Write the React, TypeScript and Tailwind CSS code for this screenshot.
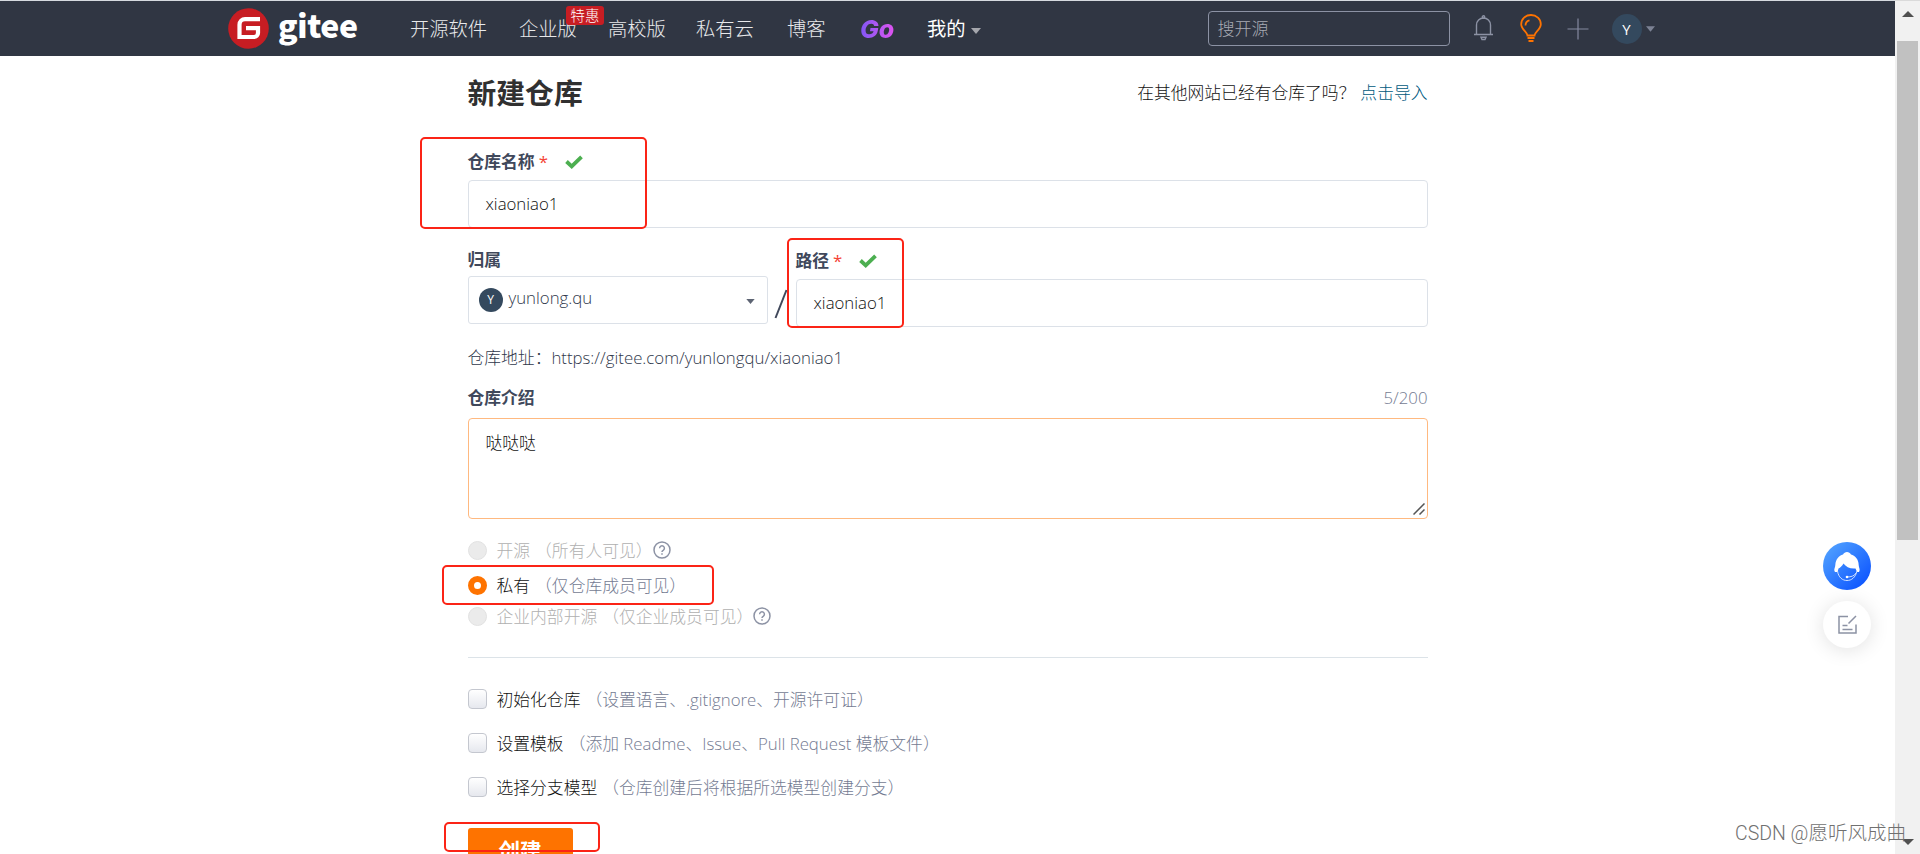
import React, { useState } from "react";

const FONT = "font-['Open_Sans','Noto_Sans_CJK_SC',sans-serif]";

function Logo() {
    return (
        <div className="flex items-center">
            <svg width="41" height="41" viewBox="0 0 41 41">
                <circle cx="20.5" cy="20.5" r="20.3" fill="#c71d23" />
                <path
                    d="M32 11.2H17a5.5 5.5 0 0 0-5.5 5.5V29H26a4 4 0 0 0 4-4V20.2H18"
                    fill="none"
                    stroke="#fff"
                    strokeWidth="4.2"
                />
            </svg>
            <span className="ml-[9px] -mt-[9px] font-['Noto_Sans_CJK_SC','Open_Sans',sans-serif] font-black text-[32px] leading-[40px] text-white w-[81px] tracking-[-0.4px]">
                gitee
            </span>
        </div>
    );
}

function Caret({ className }: { className: string }) {
    return (
        <svg width="10" height="6" viewBox="0 0 10 6" className={className}>
            <path d="M0 0H10L5 6Z" fill="currentColor" />
        </svg>
    );
}

function Header() {
    return (
        <header className="h-[56px] bg-[#303643] border-t border-[#d5dadf] flex items-center pl-[228px] text-[19.3px] leading-[28px] text-[#e8e9eb]">
            <Logo />
            <nav className="flex items-center ml-[51px] whitespace-nowrap font-light">
                <a className="w-[109px]">开源软件</a>
                <a className="relative w-[89px]">
                    企业版
                    <span className="absolute left-[47px] -top-[9px] w-[38px] h-[19px] rounded-[3px] bg-[#c71d23] text-white text-[14.4px] leading-[19px] text-center">
                        特惠
                    </span>
                </a>
                <a className="w-[88px]">高校版</a>
                <a className="w-[91px]">私有云</a>
                <a className="w-[73px]">博客</a>
                <a className="w-[67px] font-['Inter',sans-serif] font-extrabold italic text-[25px] bg-gradient-to-r from-[#7f55f5] from-0% to-[#dd52f0] to-50% bg-clip-text text-transparent">
                    Go
                </a>
                <a className="flex items-center text-white font-normal">
                    我的
                    <Caret className="ml-[5px] mt-[5px] text-[#a5a7ad]" />
                </a>
            </nav>
            <div className="ml-[227px] w-[242px] h-[35px] border border-[#8c92a4] rounded-[4px] flex items-center px-[9px] text-[17px] font-light text-[#a8abb4]">
                搜开源
            </div>
            <svg className="ml-[23px] -mt-[2px]" width="21" height="26" viewBox="0 0 21 26" fill="none" stroke="#8c92a4" strokeWidth="1.4">
                <path d="M1 19.5H20M3.5 19.5V10a7 7 0 0 1 14 0V19.5M8 22.2H13L12 24.5H9Z" />
                <circle cx="10.5" cy="2" r="1.2" />
            </svg>
            <svg className="ml-[26px]" width="22" height="29" viewBox="0 0 22 29" fill="none" stroke="#fe7300" strokeWidth="1.8">
                <path d="M7.5 21.5C7.5 18 1.2 15.5 1.2 10.2a9.8 9.2 0 0 1 19.6 0C20.8 15.5 14.5 18 14.5 21.5Z" />
                <path d="M5.5 11.5C5.5 8.5 7 6.8 9.5 6.3M7.5 24H14.5M8.5 27H13.5" />
            </svg>
            <svg className="ml-[25px]" width="22" height="22" viewBox="0 0 22 22" stroke="#8489a0" strokeWidth="1.2">
                <path d="M11 0.5V21.5M0.5 11H21.5" />
            </svg>
            <span className="ml-[23px] w-[30px] h-[30px] rounded-full bg-[#34495e] text-white text-[15px] flex items-center justify-center">
                Y
            </span>
            <Caret className="ml-[4px] text-[#7c8294] w-[9px]" />
        </header>
    );
}

function Required() {
    return <span className="text-[#f44336] ml-[4px] font-normal">*</span>;
}

function Check() {
    return (
        <svg className="ml-[17px] -mt-px" width="18" height="14" viewBox="0 0 18 14" fill="none">
            <path d="M1.5 6.5L6.7 11.3L16.5 1.8" stroke="#4caf50" strokeWidth="3.8" />
        </svg>
    );
}

function Help() {
    return (
        <svg className="relative -top-px" width="18" height="18" viewBox="0 0 18 18" fill="none" stroke="#8c92a4" strokeWidth="1.5">
            <circle cx="9" cy="9" r="8" />
            <path d="M6.6 7.2a2.4 2.4 0 1 1 3.6 2.1C9.4 9.8 9 10.2 9 11" />
            <path d="M9 12.2V13.8" />
        </svg>
    );
}

const options = [
    { title: "初始化仓库", note: "（设置语言、.gitignore、开源许可证）" },
    { title: "设置模板", note: "（添加 Readme、Issue、Pull Request 模板文件）" },
    { title: "选择分支模型", note: "（仓库创建后将根据所选模型创建分支）" },
];

function NewRepoForm() {
    const [name] = useState("xiaoniao1");

    return (
        <main className="ml-[467.5px] w-[960px] text-[16.8px] leading-[24px] font-light text-[#30384b]">
            <div className="h-[74px] flex items-center justify-between">
                <h1 className="font-bold text-[28.8px] text-[#303030]">新建仓库</h1>
                <p className="text-[#111] -mt-px">
                    在其他网站已经有仓库了吗？<a className="text-[#005980] ml-[5px]">点击导入</a>
                </p>
            </div>

            {/* Name */}
            <div className="mt-[14px] h-[36px] flex items-center font-bold text-[#40485b]">
                仓库名称
                <Required />
                <Check />
            </div>
            <div className="h-[48px] border border-[#dce1e8] rounded-[4px] flex items-center px-[17px] text-[#111]">
                {name}
            </div>

            {/* Owner / path */}
            <div className="flex items-start pt-[15px]">
                <div className="w-[300px] pt-px">
                    <div className="h-[32px] flex items-center font-bold text-[#40485b]">归属</div>
                    <div className="h-[48px] border border-[#dce1e8] rounded-[3px] flex items-center pl-[10px] pr-[12px]">
                        <span className="w-[24px] h-[24px] rounded-full bg-[#34495e] text-white text-[12px] font-normal flex items-center justify-center">
                            Y
                        </span>
                        <span className="ml-[6px] -mt-[4px] flex-1">yunlong.qu</span>
                        <Caret className="w-[9px] h-[5px] mt-[2px] text-[#5d6473]" />
                    </div>
                </div>
                <svg className="ml-[6px] mt-[46px] mr-[7px]" width="15" height="30" viewBox="0 0 15 30">
                    <path d="M1.5 29L12.5 1" stroke="#40485b" strokeWidth="2" />
                </svg>
                <div className="w-[632px]">
                    <div className="h-[36px] flex items-center font-bold text-[#40485b]">
                        路径
                        <Required />
                        <Check />
                    </div>
                    <div className="h-[48px] border border-[#dce1e8] rounded-[4px] flex items-center px-[17px] text-[#111]">
                        {name}
                    </div>
                </div>
            </div>

            <p className="mt-[13px] h-[36px] flex items-center">
                仓库地址：<span>https://gitee.com/yunlongqu/{name}</span>
            </p>

            {/* Description */}
            <div className="mt-[2px] h-[40px] flex items-center justify-between">
                <span className="font-bold text-[#40485b]">仓库介绍</span>
                <span className="text-[#747b92]">5/200</span>
            </div>
            <div className="h-[101px] border border-[#ffb980] rounded-[4px] flex justify-between pl-[17px] pt-[12px] pr-[2px] pb-[3px] text-[#111]">
                哒哒哒
                <svg className="self-end" width="12" height="12" viewBox="0 0 12 12" stroke="#555" strokeWidth="1.5">
                    <path d="M0.5 11.5L11.5 0.5M6.5 11.5L11.5 6.5" />
                </svg>
            </div>

            {/* Visibility */}
            <div className="mt-[14px] h-[36px] flex items-center text-[#b0b0b0]">
                <span className="w-[19px] h-[19px] rounded-full bg-[#ebebeb] border border-[#e2e2e2] mr-[10px] -mt-px" />
                开源<span className="ml-[5px]">（所有人可见）</span>
                <Help />
            </div>
            <div className="h-[34px] flex items-center text-[#111]">
                <span className="w-[19px] h-[19px] rounded-full bg-white border-[6px] border-[#fe7300] mr-[10px] -mt-px" />
                私有<span className="ml-[5px] text-[#747b92]">（仅仓库成员可见）</span>
            </div>
            <div className="h-[28px] flex items-center text-[#b0b0b0]">
                <span className="w-[19px] h-[19px] rounded-full bg-[#ebebeb] border border-[#e2e2e2] mr-[10px] -mt-px" />
                企业内部开源<span className="ml-[5px]">（仅企业成员可见）</span>
                <Help />
            </div>

            <div className="mt-[26px] mb-[20px] h-px bg-[#dce3e8]" />

            {options.map((o) => (
                <div key={o.title} className="h-[44px] flex items-center text-[#111]">
                    <span className="w-[19px] h-[20px] rounded-[4px] border border-[#c4c7cf] bg-gradient-to-b from-white to-[#e6e8ee] mr-[10px] -mt-[2px]" />
                    {o.title}
                    <span className="ml-[5px] text-[#747b92]">{o.note}</span>
                </div>
            ))}

            <button className="mt-[18px] w-[105px] h-[46px] rounded-[3px] bg-[#fe7300] text-white font-bold text-[21.6px] leading-[46px]">
                创建
            </button>
        </main>
    );
}

function Scrollbar() {
    return (
        <div className="w-[25px] h-[854px] bg-[#f1f1f1] border-t border-[#dadada] flex flex-col items-center">
            <svg className="mt-[10px]" width="12" height="6" viewBox="0 0 12 6">
                <path d="M0 6L6 0L12 6Z" fill="#505050" />
            </svg>
            <div className="mt-[24px] w-[21px] h-[499px] bg-[#c1c1c1]" />
            <svg className="mt-[299px]" width="12" height="6" viewBox="0 0 12 6">
                <path d="M0 0L6 6L12 0Z" fill="#505050" />
            </svg>
        </div>
    );
}

function FloatingTools() {
    return (
        <div className="absolute left-[1823px] top-[542px] flex flex-col gap-[11px]">
            <svg width="48" height="48" viewBox="0 0 48 48">
                <defs>
                    <linearGradient id="help-bg" x1="0.1" y1="0.1" x2="0.9" y2="0.9">
                        <stop offset="0" stopColor="#4f9fff" />
                        <stop offset="1" stopColor="#0d55ff" />
                    </linearGradient>
                </defs>
                <circle cx="24" cy="24" r="24" fill="url(#help-bg)" />
                <path
                    d="M12 30C10.5 27 12 26.5 12.3 23C12.8 17 16 13.5 20 12.5C21.5 9 26.5 9 28 12.5C32 13.5 35.5 17 35.7 23C36 26.5 37.5 27 36 30L34 30L32.5 26.5C27 27 23 25 20.5 21.5C19 24 17.5 25.5 15.5 26.5L14.5 30Z"
                    fill="#fff"
                />
                <path d="M14.5 29C15.5 35.5 19.5 38.5 24 38.5C28.5 38.5 32.5 35.5 34 29M33 31C31.5 34 28 35 24 35" fill="none" stroke="#cfe0ff" strokeWidth="1" />
                <circle cx="24" cy="35" r="1.3" fill="#fff" />
            </svg>
            <div className="w-[48px] h-[47px] rounded-full bg-white shadow-[0_2px_20px_rgba(0,0,0,0.12)] flex items-center justify-center">
                <svg width="19" height="19" viewBox="0 0 19 19" fill="none" stroke="#8c92a4" strokeWidth="1.5">
                    <path d="M10 1.5H1V18H18V9.5M18 1L10.5 8.5M4.5 10.5H9.5M4.5 14.5H14.5" />
                </svg>
            </div>
        </div>
    );
}

export default function App() {
    return (
        <div className={`relative w-[1920px] h-[854px] overflow-hidden bg-white flex ${FONT}`}>
            <div className="w-[1895px]">
                <Header />
                <NewRepoForm />
            </div>
            <Scrollbar />
            <FloatingTools />

            {/* Highlight boxes */}
            <div className="absolute left-[419.5px] top-[137px] w-[227px] h-[92px] border-2 border-[#fb2416] rounded-[5px]" />
            <div className="absolute left-[787px] top-[238px] w-[117px] h-[90px] border-2 border-[#fb2416] rounded-[5px]" />
            <div className="absolute left-[442px] top-[565px] w-[272px] h-[40px] border-2 border-[#fb2416] rounded-[5px]" />
            <div className="absolute left-[444px] top-[822px] w-[156px] h-[30px] border-2 border-[#fb2416] rounded-[5px]" />

            <span className="absolute left-[1735px] top-[820px] font-['Roboto','Noto_Sans_CJK_SC',sans-serif] font-light text-[19.5px] leading-[28px] text-[#707070] whitespace-nowrap">
                CSDN @愿听风成曲
            </span>
        </div>
    );
}
